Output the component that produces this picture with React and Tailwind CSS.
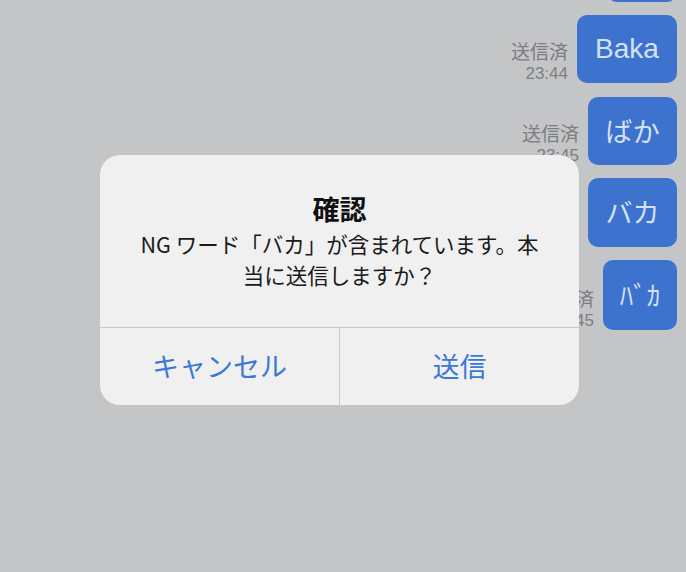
const JP = { fontFamily: '"Noto Sans CJK JP", "Noto Sans", sans-serif' }
const LATIN = { fontFamily: '"Liberation Sans", "Noto Sans CJK JP", sans-serif' }

const MESSAGES = [
  { id: 0, text: '', w: 'w-[70px]', h: 'h-[68px]', mt: '-mt-[66px]', label: false },
  { id: 1, text: 'Baka', w: 'w-[100px]', h: 'h-[68px]', mt: 'mt-[13px]', label: '23:44', latin: true },
  { id: 2, text: 'ばか', w: 'w-[89px]', h: 'h-[68px]', mt: 'mt-[14px]', label: '23:45' },
  { id: 3, text: 'バカ', w: 'w-[89px]', h: 'h-[69px]', mt: 'mt-[13px]', label: '23:45' },
  { id: 4, text: 'ﾊﾞｶ', w: 'w-[74px]', h: 'h-[70px]', mt: 'mt-[13px]', label: '23:45' },
]

function SentLabel({ time }) {
  return (
    <div className="flex flex-col items-end text-[#7d7e82]">
      <span className="text-[19px] leading-[28px]" style={JP}>送信済</span>
      <span className="text-[17px] leading-[18px]" style={LATIN}>{time}</span>
    </div>
  )
}

function Bubble({ msg }) {
  return (
    <div className={`flex items-end justify-end gap-[9px] ${msg.mt}`}>
      {msg.label && <SentLabel time={msg.label} />}
      <div
        className={`${msg.w} ${msg.h} rounded-[10px] bg-[#3d72cf] flex items-center justify-center text-[#d5e1f5] ${msg.latin ? 'text-[28px]' : 'text-[27px]'}`}
        style={msg.latin ? LATIN : JP}
      >
        {msg.text}
      </div>
    </div>
  )
}

function ConfirmDialog() {
  return (
    <div className="absolute left-[100px] top-[155px] w-[479px] h-[250px] rounded-[20px] bg-[#f0f0f1] flex flex-col overflow-hidden" style={JP}>
      <div className="pt-[37px] pb-[37px] px-4 text-center">
        <div className="text-[27px] leading-[34px] font-bold text-[#111]">確認</div>
        <div className="mt-[2px] text-[21.5px] leading-[31px] text-[#1a1a1a]">
          NG ワード「バカ」が含まれています。本<br />当に送信しますか？
        </div>
      </div>
      <div className="flex flex-1 border-t border-[#c9c9cc]">
        <button className="flex-1 flex items-center justify-center text-[27px] text-[#3b78d6]">キャンセル</button>
        <button className="flex-1 flex items-center justify-center text-[27px] text-[#3b78d6] border-l border-[#c9c9cc]">送信</button>
      </div>
    </div>
  )
}

export default function App() {
  return (
    <div className="relative w-[686px] h-[572px] overflow-hidden bg-[#c4c5c7]">
      <div className="flex flex-col items-end pr-[9px]">
        {MESSAGES.map((m) => (
          <Bubble key={m.id} msg={m} />
        ))}
      </div>
      <ConfirmDialog />
    </div>
  )
}
